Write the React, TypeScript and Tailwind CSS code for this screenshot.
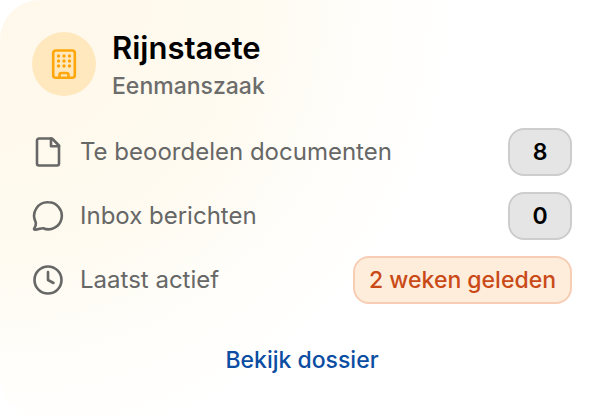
import { ReactNode } from 'react';

interface StatRowProps {
  icon: ReactNode;
  label: string;
  children: ReactNode;
}

const iconProps = {
  viewBox: '0 0 32 32',
  fill: 'none',
  stroke: 'currentColor',
  strokeWidth: 2.6,
  strokeLinecap: 'round' as const,
  strokeLinejoin: 'round' as const,
  'aria-hidden': true,
};

const windowRows = [8, 13, 18];
const windowCols = [10.5, 16, 21.5];

function BuildingIcon() {
  return (
    <svg {...iconProps} className="w-8 h-8 text-[#ffa60a]">
      <rect x="5.2" y="2.5" width="21.6" height="27.2" rx="2.5" />
      <path d="M11.500 29.500v-2.500a2 2 0 0 1 2-2h5a2 2 0 0 1 2 2v2.500" />
      {windowRows.map((y) =>
        windowCols.map((x) => (
          <circle key={`${x}-${y}`} cx={x} cy={y} r="1.7" fill="currentColor" stroke="none" />
        ))
      )}
    </svg>
  );
}

function FileIcon() {
  return (
    <svg {...iconProps} className="w-8 h-8">
      <path d="M20 2.500H7A2 2 0 0 0 5 4.500v23A2 2 0 0 0 7 29.500h18A2 2 0 0 0 27 27.500V9.500z" />
      <path d="M19 2.500V10.200h8" />
    </svg>
  );
}

function ChatIcon() {
  return (
    <svg {...iconProps} className="w-8 h-8">
      <path d="M16.300 2.300a13.500 13.500 0 1 1-5.100 26C9.700 27.800 5.800 29.900 3 29.700c-1.300-.1-1.100-1-.4-2 1.100-1.700 1.500-4.200.9-6A13.500 13.500 0 0 1 16.300 2.300z" />
    </svg>
  );
}

function ClockIcon() {
  return (
    <svg {...iconProps} className="w-8 h-8">
      <circle cx="16" cy="16" r="13.500" />
      <path d="M16 8v8l5.500 3" />
    </svg>
  );
}

function StatRow({ icon, label, children }: StatRowProps) {
  return (
    <li className="flex items-center justify-between">
      <div className="flex items-center gap-4 text-[#666766]">
        {icon}
        <span>{label}</span>
      </div>
      {children}
    </li>
  );
}

function CountBadge({ count }: { count: number }) {
  return (
    <span className="flex h-12 min-w-16 items-center justify-center rounded-2xl border-2 border-[#cdcdcd] bg-[#e5e5e5] text-[23px] font-semibold text-black">
      {count}
    </span>
  );
}

export default function App() {
  return (
    <div className="min-h-screen bg-white">
      <article className="flex min-h-screen flex-col rounded-[40px] bg-[radial-gradient(circle_at_top_left,#fff8eb_0%,#fffaef_32%,#fffdf8_46%,#ffffff_62%)] p-8 font-['Inter',sans-serif] text-2xl/8">
        <header className="flex items-start gap-4">
          <div className="flex h-16 w-16 items-center justify-center rounded-full bg-[#ffe8be]">
            <BuildingIcon />
          </div>
          <div className="flex flex-col gap-2">
            <h2 className="text-[31px]/8 font-semibold text-black">Rijnstaete</h2>
            <p className="text-[23px]/7 font-medium text-[#6c6c6b]">Eenmanszaak</p>
          </div>
        </header>

        <ul className="mt-7 flex flex-col gap-4">
          <StatRow icon={<FileIcon />} label="Te beoordelen documenten">
            <CountBadge count={8} />
          </StatRow>
          <StatRow icon={<ChatIcon />} label="Inbox berichten">
            <CountBadge count={0} />
          </StatRow>
          <StatRow icon={<ClockIcon />} label="Laatst actief">
            <span className="flex h-12 items-center rounded-2xl border-2 border-[#f7cdb4] bg-[#ffeddc] px-3.5 text-[23px] font-medium text-[#c94a17]">
              2 weken geleden
            </span>
          </StatRow>
        </ul>

        <a href="#dossier" className="mt-10 self-center text-[23px] font-medium text-[#0b4da2]">
          Bekijk dossier
        </a>
      </article>
    </div>
  );
}
